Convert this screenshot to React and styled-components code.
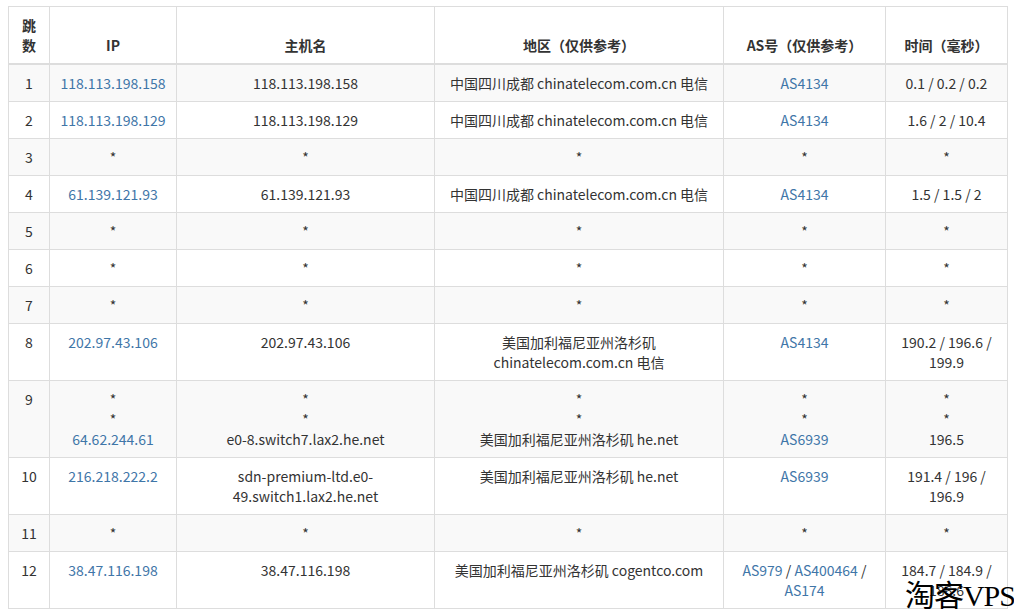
import React from 'react'
import styled, { createGlobalStyle } from 'styled-components'

const Global = createGlobalStyle`
  body { margin: 0; padding: 6px 7px 0 8px; background: #fff; font-family: "Noto Sans CJK SC", "Noto Sans", sans-serif; color: #333; }
  * { box-sizing: border-box; }
`

const Wrap = styled.div`
  position: relative;
`

const Table = styled.table`
  width: 999px;
  border-collapse: collapse;
  table-layout: fixed;
  font-size: 14px;
  line-height: 20px;
`

const Th = styled.th`
  border: 1px solid #ddd;
  border-bottom: 2px solid #ddd;
  padding: 8px;
  vertical-align: bottom;
  font-weight: bold;
  text-align: center;
  height: 56px;
  width: ${p => p.w}px;
`

const Tr = styled.tr`
  background: ${p => (p.odd ? '#f9f9f9' : '#fff')};
`

const Td = styled.td`
  border: 1px solid #ddd;
  padding: 8px;
  vertical-align: top;
  text-align: center;
  word-break: break-all;
`

const Link = styled.span`
  color: #3f76a8;
`

const Watermark = styled.div`
  position: absolute;
  right: -8px;
  bottom: -6px;
  font-family: "Liberation Serif", "Noto Sans CJK SC", serif;
  font-size: 30px;
  color: #000;
  letter-spacing: -1px;
`

const S = '*'
const CN = '中国四川成都 chinatelecom.com.cn 电信'
const US = '美国加利福尼亚州洛杉矶'

const rows = [
  ['1', [<Link>118.113.198.158</Link>], ['118.113.198.158'], [CN], [<Link>AS4134</Link>], ['0.1 / 0.2 / 0.2']],
  ['2', [<Link>118.113.198.129</Link>], ['118.113.198.129'], [CN], [<Link>AS4134</Link>], ['1.6 / 2 / 10.4']],
  ['3', [S], [S], [S], [S], [S]],
  ['4', [<Link>61.139.121.93</Link>], ['61.139.121.93'], [CN], [<Link>AS4134</Link>], ['1.5 / 1.5 / 2']],
  ['5', [S], [S], [S], [S], [S]],
  ['6', [S], [S], [S], [S], [S]],
  ['7', [S], [S], [S], [S], [S]],
  ['8', [<Link>202.97.43.106</Link>], ['202.97.43.106'], [US, 'chinatelecom.com.cn 电信'], [<Link>AS4134</Link>], ['190.2 / 196.6 /', '199.9']],
  ['9', [S, S, <Link>64.62.244.61</Link>], [S, S, 'e0-8.switch7.lax2.he.net'], [S, S, US + ' he.net'], [S, S, <Link>AS6939</Link>], [S, S, '196.5']],
  ['10', [<Link>216.218.222.2</Link>], ['sdn-premium-ltd.e0-', '49.switch1.lax2.he.net'], [US + ' he.net'], [<Link>AS6939</Link>], ['191.4 / 196 /', '196.9']],
  ['11', [S], [S], [S], [S], [S]],
  ['12', [<Link>38.47.116.198</Link>], ['38.47.116.198'], [US + ' cogentco.com'], [<><Link>AS979</Link> / <Link>AS400464</Link> /</>, <Link>AS174</Link>], ['184.7 / 184.9 /', '186.6']],
]

const Cell = ({ lines }) => (
  <Td>
    {lines.map((l, i) => (
      <div key={i}>{l}</div>
    ))}
  </Td>
)

export default function App() {
  return (
    <Wrap>
      <Global />
      <Table>
        <thead>
          <tr>
            <Th w={41}>跳<br />数</Th>
            <Th w={127}>IP</Th>
            <Th w={258}>主机名</Th>
            <Th w={289}>地区（仅供参考）</Th>
            <Th w={162}>AS号（仅供参考）</Th>
            <Th w={122}>时间（毫秒）</Th>
          </tr>
        </thead>
        <tbody>
          {rows.map((r, i) => (
            <Tr key={r[0]} odd={i % 2 === 0}>
              <Td>{r[0]}</Td>
              {r.slice(1).map((c, j) => (
                <Cell key={j} lines={c} />
              ))}
            </Tr>
          ))}
        </tbody>
      </Table>
      <Watermark>淘客VPS</Watermark>
    </Wrap>
  )
}
